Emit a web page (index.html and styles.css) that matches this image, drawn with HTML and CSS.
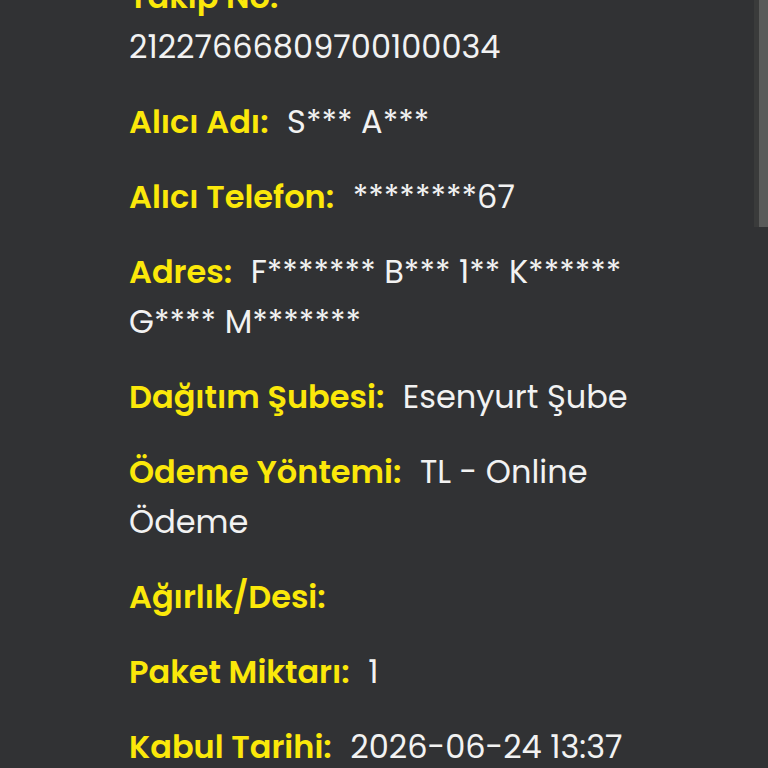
FILE: index.html
```html
<!DOCTYPE html>
<html lang="tr">
<head>
  <meta charset="UTF-8" />
  <meta name="viewport" content="width=device-width, initial-scale=1.0"/>
  <title>Gönderi Detayı</title>
  <link rel="stylesheet" href="styles.css">
</head>
<body>
  <div class="details">
    <p class="row"><span class="label">Takip No:</span> <span class="value">21227666809700100034</span></p>
    <p class="row"><span class="label">Alıcı Adı:</span> <span class="value">S*** A***</span></p>
    <p class="row"><span class="label">Alıcı Telefon:</span> <span class="value">********67</span></p>
    <p class="row"><span class="label">Adres:</span> <span class="value">F******* B*** 1** K****** G**** M*******</span></p>
    <p class="row"><span class="label">Dağıtım Şubesi:</span> <span class="value">Esenyurt Şube</span></p>
    <p class="row"><span class="label">Ödeme Yöntemi:</span> <span class="value">TL - Online Ödeme</span></p>
    <p class="row"><span class="label">Ağırlık/Desi:</span> <span class="value"></span></p>
    <p class="row"><span class="label">Paket Miktarı:</span> <span class="value">1</span></p>
    <p class="row"><span class="label">Kabul Tarihi:</span> <span class="value">2026-06-24 13:37</span></p>
  </div>

  <div class="scroll-thumb"></div>
</body>
</html>
```

FILE: styles.css
```css
body {
  margin: 0;
  background: #313234;
  font-family: 'Poppins', 'Inter', sans-serif;
  color: #f2f2f2;
  overflow: hidden;
}

.details {
  width: 520px;
  margin-top: -28px;
  padding-left: 129px;
}

.row {
  margin: 0 0 25px;
  font-size: 32px;
  line-height: 50px;
}

.label {
  color: #fbe80a;
  font-weight: 600;
  margin-right: 10px;
}

.value {
  font-weight: 400;
}

.scroll-thumb {
  position: fixed;
  top: 0;
  right: 0;
  width: 9px;
  height: 227px;
  background: #5a5b5a;
  border-left: 5px solid #3a3b3b;
}
```
